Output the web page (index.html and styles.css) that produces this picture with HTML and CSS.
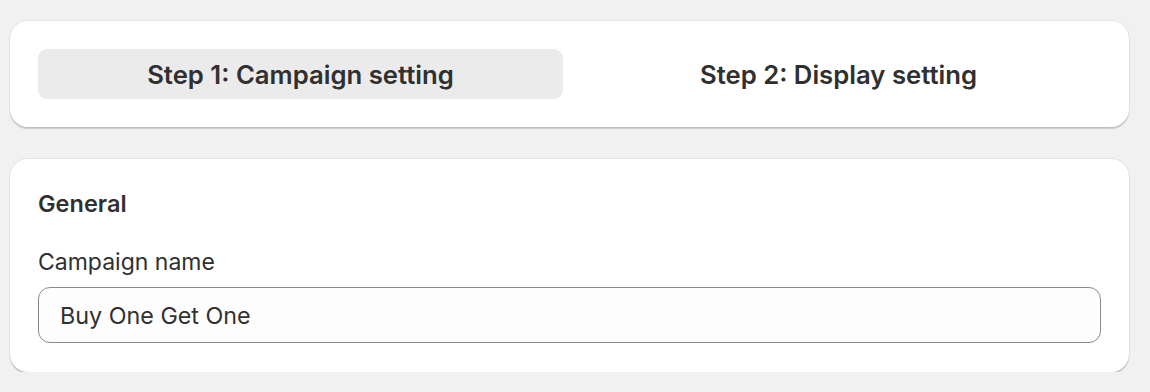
FILE: index.html
```html
<!DOCTYPE html>
<html>
<head>
<meta charset="utf-8">
<link rel="stylesheet" href="styles.css">
</head>
<body>
<div class="page">
  <div class="card steps">
    <div class="tab active">Step 1: Campaign setting</div>
    <div class="tab">Step 2: Display setting</div>
  </div>
  <div class="card general">
    <div class="title">General</div>
    <label class="label">Campaign name</label>
    <div class="input">Buy One Get One</div>
  </div>
</div>
</body>
</html>
```
FILE: styles.css
```css
html, body {
  margin: 0;
  padding: 0;
  background: #f1f1f1;
}
body {
  font-family: Inter, "Noto Sans", sans-serif;
  color: #303030;
}
.page {
  width: 1119px;
  padding: 21px 0 0 10px;
  display: flex;
  flex-direction: column;
  gap: 32px;
}
.card {
  background: #fff;
  border-radius: 18px;
  box-shadow: 0 1.5px 1px rgba(0,0,0,0.16), 0 0 0 1px rgba(0,0,0,0.05);
  padding: 28px;
}
.steps {
  display: flex;
  gap: 13px;
}
.tab {
  flex: 1;
  height: 50px;
  border-radius: 9px;
  display: flex;
  align-items: center;
  justify-content: center;
  font-size: 25.7px;
  font-weight: 600;
}
.tab.active {
  background: #ebebeb;
}
.general {
  display: flex;
  flex-direction: column;
  padding-top: 31px;
  padding-bottom: 29px;
}
.title {
  font-size: 23.5px;
  font-weight: 600;
  line-height: 28px;
}
.label {
  margin-top: 30px;
  font-size: 23px;
  line-height: 28px;
  margin-bottom: 11px;
}
.input {
  height: 54px;
  border: 1px solid #8a8a8a;
  border-radius: 12px;
  background: #fdfdfd;
  display: flex;
  align-items: center;
  padding: 0 21px;
  font-size: 23.3px;
}
```
